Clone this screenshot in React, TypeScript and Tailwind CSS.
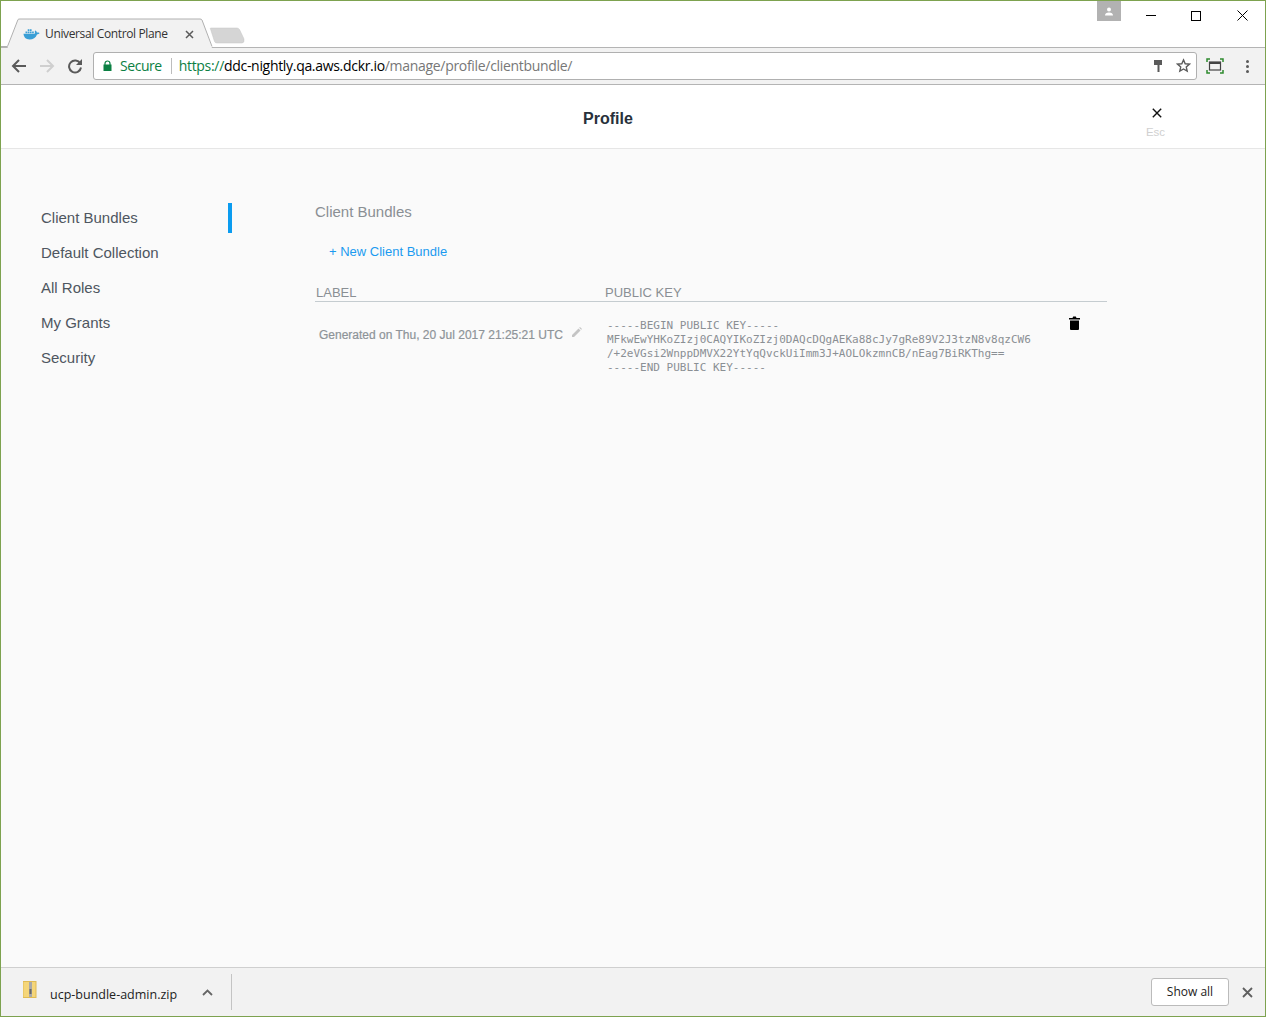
import React from 'react';

const navItems = ['Client Bundles', 'Default Collection', 'All Roles', 'My Grants', 'Security'];

function DockerIcon() {
  return (
    <svg width="17" height="12" viewBox="0 0 17 12" className="shrink-0">
      <path fill="#3a9fd6" d="M0.500 5.800h11.200c.4-1 .3-2 .1-2.800l.8-.6c.8.6 1.200 1.400 1.300 2.100.8-.2 1.700-.1 2.600.4-.5 1-1.300 1.400-2.500 1.500C12.900 9.700 10 11.500 6.500 11.500 2.800 11.500 .8 9.200 .5 5.800z" />
      <path fill="#3a9fd6" d="M2.500 3.500h1.700v1.700H2.500zM4.700 3.500h1.700v1.700H4.700zM6.900 3.500h1.700v1.700H6.900zM9.100 3.500h1.700v1.700H9.100zM4.700 1.300h1.700V3H4.700zM6.900 1.300h1.700V3H6.900z" />
    </svg>
  );
}

function TitleBar() {
  return (
    <div className="relative z-10 h-[46px] shrink-0 bg-white">
      <svg width="250" height="30" viewBox="0 0 250 30" className="absolute left-0 top-[17px]">
        <path d="M6.500 30L17 1.500Q17.500 1 19 1H199Q200.500 1 201 2L211 30Z" fill="#f2f2f2" />
        <path d="M0 28.500H6.500L17 1.500Q17.500 1 19 1H199Q200.500 1 201 2L211 28.500" fill="none" stroke="#b0b0b0" strokeWidth="1" />
        <path d="M209.500 10H236Q237.500 10 238.500 11.500L243 21Q243.500 25 241 25H216Q214 25 213.500 23.500L209.500 11Q209 10 209.500 10Z" fill="#d5d5d5" stroke="#c4c4c4" strokeWidth="0.5" />
      </svg>
      <div className="absolute left-[22px] top-[26px] flex h-[14px] items-center">
        <DockerIcon />
        <span className="ml-[5px] w-[140px] text-[12px] tracking-[-0.36px] text-[#333] [font-family:'Open_Sans',sans-serif]">Universal Control Plane</span>
        <svg width="9" height="9" viewBox="0 0 9 9" className="shrink-0">
          <path d="M1 1l7 7M8 1L1 8" stroke="#5a5a5a" strokeWidth="1.500" />
        </svg>
      </div>
      <div className="absolute right-0 top-0 flex items-start">
        <div className="mr-[8px] flex h-[20px] w-[24px] items-center justify-center bg-[#b2b2b2]">
          <svg width="10" height="9" viewBox="0 0 10 9">
            <circle cx="5" cy="2.500" r="2" fill="#fff" />
            <path d="M1 8.500c0-2 1.500-3 4-3s4 1 4 3z" fill="#fff" />
          </svg>
        </div>
        <div className="flex h-[29px] w-[44px] items-center justify-center">
          <div className="h-px w-[10px] bg-black" />
        </div>
        <div className="flex h-[29px] w-[46px] items-center justify-center">
          <div className="h-[10px] w-[10px] border border-black" />
        </div>
        <div className="flex h-[29px] w-[46px] items-center justify-center">
          <svg width="11" height="11" viewBox="0 0 11 11">
            <path d="M.5.5l10 10M10.500.5l-10 10" stroke="#000" strokeWidth="1" />
          </svg>
        </div>
      </div>
    </div>
  );
}

function Toolbar() {
  return (
    <div className="flex h-[38px] shrink-0 items-center border-y border-y-[#b4b4b4] bg-[#f2f2f2]">
      <svg width="16" height="16" viewBox="0 0 16 16" className="ml-[10px]">
        <path d="M15 8H2.500M8 2L2 8l6 6" fill="none" stroke="#5a5a5a" strokeWidth="2" />
      </svg>
      <svg width="16" height="16" viewBox="0 0 16 16" className="ml-[12px]">
        <path d="M1 8h12.500M8 2l6 6-6 6" fill="none" stroke="#cfcfcf" strokeWidth="2" />
      </svg>
      <svg width="16" height="16" viewBox="0 0 16 16" className="ml-[12px]">
        <path d="M13.300 5.500A6 6 0 1 0 14 9.500" fill="none" stroke="#5a5a5a" strokeWidth="2" />
        <path d="M15 1v6H9z" fill="#5a5a5a" />
      </svg>
      <div className="ml-[10px] flex h-[28px] w-[1104px] items-center rounded-[3px] border border-[#b0b0b0] bg-white pb-[1px] pl-[9px] text-[14px] [font-family:'Open_Sans',sans-serif]">
        <svg width="9" height="12" viewBox="0 0 9 12" className="shrink-0">
          <path d="M2 5V3.500a2.500 2.500 0 0 1 5 0V5" fill="none" stroke="#0b8043" strokeWidth="1.200" />
          <rect x="0.500" y="4.500" width="8" height="6.500" fill="#0b8043" />
        </svg>
        <span className="ml-[8px] tracking-[-0.45px] text-[#0b8043]">Secure</span>
        <div className="ml-[9px] h-[16px] w-px bg-[#bdbdbd]" />
        <span className="ml-[7px] whitespace-nowrap tracking-[-0.31px]">
          <span className="text-[#0b8043]">https://</span>
          <span className="text-black">ddc-nightly.qa.aws.dckr.io</span>
          <span className="text-[#777]">/manage/profile/clientbundle/</span>
        </span>
        <svg width="10" height="14" viewBox="0 0 10 14" className="ml-auto shrink-0">
          <path d="M1 1h8v5H6.500v7h-2V6H1z" fill="#5a5a5a" />
        </svg>
        <svg width="15" height="15" viewBox="0 0 24 24" className="ml-[13px] mr-[5px] shrink-0">
          <path d="M12 3l2.700 6.200 6.800.6-5.100 4.500 1.500 6.700L12 17.500 6.100 21l1.500-6.700L2.500 9.800l6.800-.6z" fill="none" stroke="#5a5a5a" strokeWidth="2.200" />
        </svg>
      </div>
      <svg width="18" height="16" viewBox="0 0 18 16" className="ml-[9px]">
        <path d="M1 4V1h3M14 1h3v3M17 12v3h-3M4 15H1v-3" fill="none" stroke="#2e8b2e" strokeWidth="1.500" />
        <rect x="3.500" y="4" width="11" height="8" fill="none" stroke="#444" strokeWidth="1.200" />
        <rect x="3.500" y="4" width="11" height="2" fill="#444" />
      </svg>
      <div className="ml-[22px] flex flex-col gap-[2px]">
        <div className="h-[3px] w-[3px] rounded-full bg-[#5a5a5a]" />
        <div className="h-[3px] w-[3px] rounded-full bg-[#5a5a5a]" />
        <div className="h-[3px] w-[3px] rounded-full bg-[#5a5a5a]" />
      </div>
    </div>
  );
}

function PageHeader() {
  return (
    <div className="relative flex h-[64px] shrink-0 items-center border-b border-[#e6e6e6] bg-white pt-[5px]">
      <h1 className="ml-[582px] text-[16px] font-bold text-[#28313b]">Profile</h1>
      <div className="absolute left-[1145px] top-[23px] flex w-[20px] flex-col items-center">
        <svg width="10" height="10" viewBox="0 0 10 10" className="ml-px">
          <path d="M.8.800l8.400 8.400M9.200.800L.8 9.200" stroke="#111" strokeWidth="1.400" />
        </svg>
        <span className="-ml-[1px] mt-[8px] text-[11.500px] leading-[13px] text-[#d0d0d0]">Esc</span>
      </div>
    </div>
  );
}

function Sidebar() {
  return (
    <nav className="mt-[51px] w-[231px] shrink-0">
      {navItems.map((item, i) => (
        <div key={item} className="flex h-[35px] items-center justify-between">
          <span className="ml-[40px] pt-[2px] text-[15px] text-[#4e5660]">{item}</span>
          {i === 0 && <div className="h-[30px] w-[4px] bg-[#0b9cf0]" />}
        </div>
      ))}
    </nav>
  );
}

function BundleTable() {
  return (
    <div className="ml-[83px] mt-[55px] w-[792px]">
      <h2 className="h-[16px] text-[15px] leading-[16px] text-[#8a8f94]">Client Bundles</h2>
      <div className="ml-[14px] mt-[24px] text-[13px] leading-[16px] text-[#1a9af0]">+ New Client Bundle</div>
      <div className="mt-[24px] flex h-[18px] items-end border-b border-[#c5ccd0] text-[13px] leading-[16px] text-[#8a8f94]">
        <span className="ml-px w-[289px]">LABEL</span>
        <span>PUBLIC KEY</span>
      </div>
      <div className="flex">
        <div className="ml-[4px] mt-[25px] flex w-[288px] items-start">
          <span className="text-[12px] leading-[16px] text-[#8d9398] [-webkit-text-stroke:0.2px_#8d9398]">Generated on Thu, 20 Jul 2017 21:25:21 UTC</span>
          <svg width="10" height="10" viewBox="0 0 10 10" className="ml-[9px]">
            <path d="M0 10V8l6.500-6.500 2 2L2 10zM7.200.8l.8-.8 2 2-.8.8z" fill="#c4c4c4" />
          </svg>
        </div>
        <pre className="mt-[17px] text-[11px] leading-[14px] text-[#8a8f94] [font-family:'DejaVu_Sans_Mono',monospace]">
          {'-----BEGIN PUBLIC KEY-----\nMFkwEwYHKoZIzj0CAQYIKoZIzj0DAQcDQgAEKa88cJy7gRe89V2J3tzN8v8qzCW6\n/+2eVGsi2WnppDMVX22YtYqQvckUiImm3J+AOLOkzmnCB/nEag7BiRKThg==\n-----END PUBLIC KEY-----'}
        </pre>
        <svg width="11" height="14" viewBox="0 0 11 14" className="ml-[38px] mt-[14px]">
          <path d="M0 2h3.500l.7-1.500h2.600L7.500 2H11v1.500H0zM1 4.500h9V13q0 1-1 1H2q-1 0-1-1z" fill="#000" />
        </svg>
      </div>
    </div>
  );
}

function DownloadBar() {
  return (
    <div className="flex h-[49px] shrink-0 items-center border-t border-[#cfcfcf] bg-[#f2f2f2] text-[12px] text-[#222] [font-family:'Open_Sans',sans-serif]">
      <svg width="14" height="18" viewBox="0 0 14 18" className="mb-[4px] ml-[22px]">
        <rect x="0" y="0.500" width="13" height="16" fill="#f5d67a" stroke="#e0bb55" />
        <rect x="6" y="1" width="3" height="15" fill="#a9a9a9" />
        <rect x="6.500" y="8" width="2" height="5" fill="#666" />
      </svg>
      <span className="ml-[13px] w-[152px] pt-[7px] text-[12.500px]">ucp-bundle-admin.zip</span>
      <svg width="11" height="7" viewBox="0 0 11 7">
        <path d="M1 6l4.500-4.500L10 6" fill="none" stroke="#666" strokeWidth="1.800" />
      </svg>
      <div className="ml-[18px] h-[36px] w-px bg-[#c4c4c4]" />
      <div className="ml-auto flex h-[28px] w-[78px] items-center justify-center rounded-[3px] border border-[#bbb] bg-white">Show all</div>
      <svg width="11" height="11" viewBox="0 0 11 11" className="ml-[13px] mr-[12px]">
        <path d="M1 1l9 9M10 1l-9 9" stroke="#5f5f5f" strokeWidth="1.800" />
      </svg>
    </div>
  );
}

export default function App() {
  return (
    <div className="flex h-[1017px] w-[1266px] flex-col overflow-hidden border border-[#7da24f] bg-[#fafafa] [font-family:'Liberation_Sans',sans-serif]">
      <TitleBar />
      <Toolbar />
      <PageHeader />
      <div className="flex flex-1">
        <Sidebar />
        <BundleTable />
      </div>
      <DownloadBar />
    </div>
  );
}
